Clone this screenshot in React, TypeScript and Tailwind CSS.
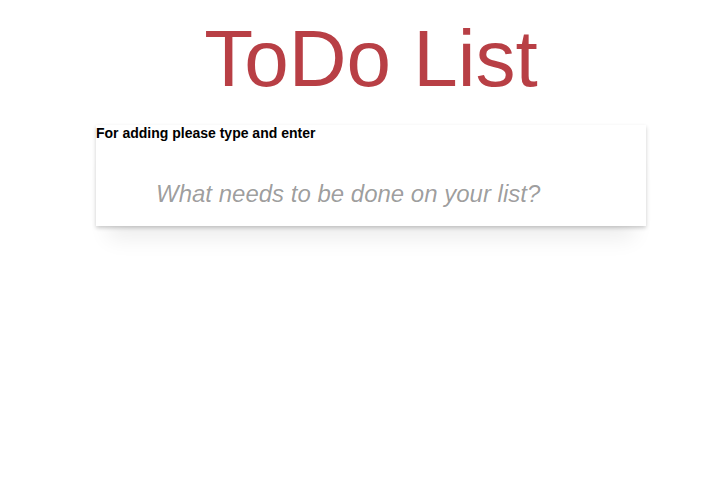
import { useState } from 'react';

export default function App() {
  const [text, setText] = useState('');

  return (
    <div className="min-h-screen bg-white font-['Liberation_Sans',Arial,sans-serif]">
      <div className="ml-[96px] w-[550px] pt-[19px]">
        <h1 className="text-center text-[80px] font-extralight leading-none text-[#b83f45]">ToDo List</h1>

        <div className="mt-[26px] bg-white shadow-[0_2px_4px_0_rgba(0,0,0,0.2),0_25px_20px_-12px_rgba(0,0,0,0.07)]">
          <p className="text-sm font-bold leading-4 text-black">For adding please type and enter</p>
          <input
            type="text"
            value={text}
            onChange={(e) => setText(e.target.value)}
            placeholder="What needs to be done on your list?"
            className="mt-[21px] block h-[64px] w-full bg-transparent pl-[60px] pr-4 text-2xl text-[#4d4d4d] outline-none placeholder:italic placeholder:text-black/40"
          />
        </div>
      </div>
    </div>
  );
}
